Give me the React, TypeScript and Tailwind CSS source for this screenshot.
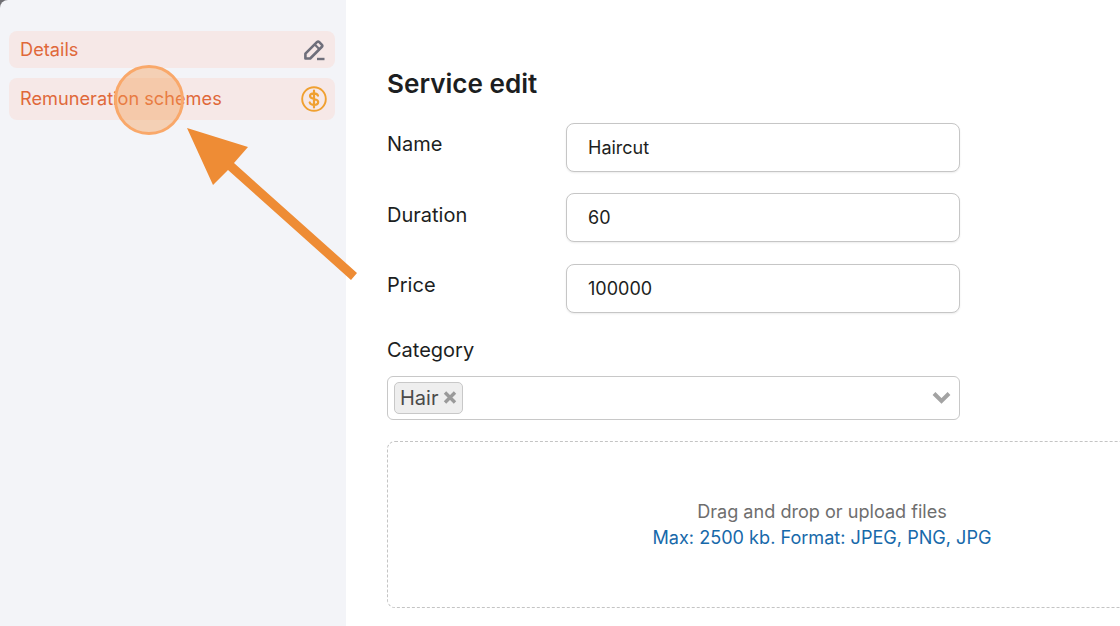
const FONT = "font-['Inter','Liberation_Sans',sans-serif]"

const EditIcon = () => (
  <svg width="22" height="22" viewBox="0 0 22 22" fill="none">
    <path d="M2.400 19.500v-4.800L13.900 3.200a1.700 1.700 0 0 1 2.400 0l2.400 2.400a1.700 1.700 0 0 1 0 2.400L7.200 19.500z" stroke="#6f6f7b" strokeWidth="2.600" strokeLinejoin="round"/>
    <path d="M11.800 5.500l4.600 4.700" stroke="#6f6f7b" strokeWidth="2.200"/>
    <path d="M14 20h7.500" stroke="#6f6f7b" strokeWidth="2.400"/>
  </svg>
)

const DollarIcon = () => (
  <svg width="26" height="26" viewBox="0 0 26 26" fill="none">
    <circle cx="13" cy="13" r="11.800" stroke="#f0a030" strokeWidth="1.900"/>
    <path d="M17 9.600c-.5-1.500-2-2.300-4-2.300-2.300 0-4 1-4 2.800 0 4.100 8.200 1.800 8.200 5.900 0 1.800-1.800 2.900-4.200 2.900-2.200 0-3.800-.9-4.300-2.400M13 4.600v16.800" stroke="#f0a030" strokeWidth="2.200" strokeLinecap="round"/>
  </svg>
)

const RemoveIcon = () => (
  <svg width="14" height="13" viewBox="0 0 14 13" fill="none">
    <path d="M2 1.500l10 10M12 1.500l-10 10" stroke="#9a9a9a" strokeWidth="3.400"/>
  </svg>
)

const ChevronIcon = () => (
  <svg width="19" height="13" viewBox="0 0 19 13" fill="none">
    <path d="M2 2.500l7.500 7.500L17 2.500" stroke="#a3a3a3" strokeWidth="4"/>
  </svg>
)

const FIELDS = [
  { label: 'Name', value: 'Haircut' },
  { label: 'Duration', value: '60' },
  { label: 'Price', value: '100000' },
]

export default function App() {
  return (
    <div className={`${FONT} relative flex h-[626px] w-[1120px] overflow-hidden bg-white`}>
      {/* Sidebar */}
      <div className="w-[346px] shrink-0 bg-[#6f6f74]">
        <div className="flex h-full flex-col gap-[10px] rounded-tl-[8px] bg-[#f3f4f8] pl-[9px] pr-[11px] pt-[31px]">
          <div className="flex h-[37px] items-center justify-between rounded-[8px] bg-[#f6e8e7] pl-[11px] pr-[10px] text-[18.200px] text-[#e0683a]">
            <span>Details</span>
            <EditIcon />
          </div>
          <div className="flex h-[42px] items-center justify-between rounded-[8px] bg-[#f6e8e7] pl-[11px] pr-[8px] text-[18.200px] text-[#e0683a]">
            <span>Remuneration schemes</span>
            <DollarIcon />
          </div>
        </div>
      </div>

      {/* Form */}
      <div className="min-w-0 flex-1 pl-[41px] pt-[68px]">
        <h1 className="text-[26.100px] font-semibold leading-[32px] text-[#1c1e21]">Service edit</h1>
        <div className="mt-[23px] flex w-[573px] flex-col gap-[21.300px]">
          {FIELDS.map(f => (
            <div key={f.label} className="flex items-start justify-between">
              <span className="pt-[8.400px] text-[20px] leading-[26px] text-[#1c1e21]">{f.label}</span>
              <div className="flex h-[49px] w-[394px] items-center rounded-[8px] border-[1.500px] border-[#c6c6c6] bg-white pl-[21px] text-[18px] text-[#1c1e21] shadow-[0_1px_2px_rgba(0,0,0,0.08)]">
                {f.value}
              </div>
            </div>
          ))}
        </div>
        <div className="mt-[24.400px] text-[20px] leading-[26px] text-[#1c1e21]">Category</div>
        <div className="mt-[13px] flex h-[44px] w-[573px] items-center justify-between rounded-[6px] border-[1.500px] border-[#c8c8c8] pl-[6px] pr-[8px]">
          <div className="flex h-[32px] items-center gap-[5px] rounded-[5px] border-[1.500px] border-[#c8c8c8] bg-[#eeeeee] pl-[5px] pr-[5px] text-[20px] text-[#4a4a4a]">
            Hair
            <RemoveIcon />
          </div>
          <ChevronIcon />
        </div>
        <div className="mt-[21px] flex h-[167px] w-[800px] flex-col items-center justify-center rounded-[8px] border border-dashed border-[#c4c4c4] pb-[1px] pl-[70px] text-[18.100px] leading-[26px]">
          <span className="text-[#6e6e6e]">Drag and drop or upload files</span>
          <span className="text-[#1769aa]">Max: 2500 kb. Format: JPEG, PNG, JPG</span>
        </div>
      </div>

      {/* Tutorial highlight and pointer */}
      <div className="absolute left-[114px] top-[65px] h-[70px] w-[70px] rounded-full border-[3px] border-[#f9a86a] bg-[#f69a50]/40" />
      <svg className="absolute left-0 top-0" width="1120" height="626" viewBox="0 0 1120 626">
        <polygon points="187,128 248,147 234,163 357,273 351,280 228,170 213,185" fill="#ee8c35" />
      </svg>
    </div>
  )
}
